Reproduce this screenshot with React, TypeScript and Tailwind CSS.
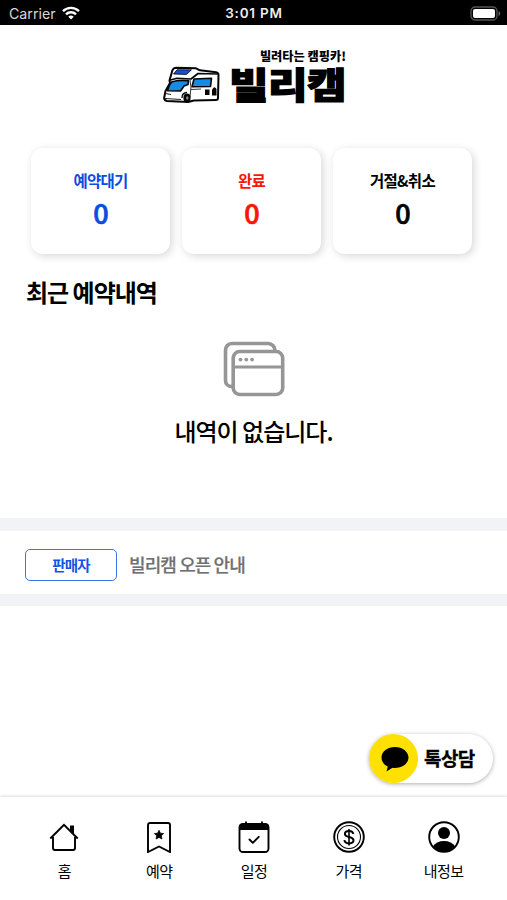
import type { ReactNode } from "react";
import { clsx } from "clsx";

type Stat = {
  label: string;
  count: number;
  color: string;
};

const STATS: Stat[] = [
  { label: "예약대기",  count: 0, color: "text-[#0a4de0]" },
  { label: "완료",      count: 0, color: "text-[#fb1505]" },
  { label: "거절&취소", count: 0, color: "text-black" },
];

function WifiIcon() {
  return (
    <svg width="18" height="14" viewBox="0 0 18 14" fill="none" stroke="#fff" strokeWidth="2.4">
      <path d="M1 5.2C5.5 .7 12.5.7 17 5.2" />
      <path d="M4 8.4c2.8-2.8 7.2-2.8 10 0" />
      <path d="M6.3 10.7c1.5-1.5 3.9-1.5 5.4 0L9 13.6z" fill="#fff" stroke="none" />
    </svg>
  );
}

function BatteryIcon() {
  return (
    <svg width="31" height="15" viewBox="0 0 31 15">
      <rect x="1" y="1" width="26" height="13" rx="4" fill="#000" stroke="#555" strokeWidth="1.3" />
      <rect x="3" y="3" width="22" height="9" rx="2" fill="#fff" />
      <path d="M28.6 5v5c2.2-1 2.2-4 0-5z" fill="#666" />
    </svg>
  );
}

function CamperLogo() {
  return (
    <svg width="58" height="38" viewBox="0 0 58 38" strokeLinejoin="round">
      <path d="M6.5 14.5L9.5 4Q10.5 2 13 1.8L33 2.3L37 4.3L53 6.3Q55.5 6.8 55.5 9L55 32Q55 34 53 34L31 34.5L25 36L4 35Q1 34.5 1.2 31.5L2.5 25L7 17Z" fill="#fff" stroke="#050505" strokeWidth="2" />
      <path d="M14 3.8L28.5 3.8L23.5 8.5L10.5 8Z" fill="#1450d2" stroke="#050505" strokeWidth=".8" />
      <path d="M6.5 14.3L14 12.3L28 13L35 7.5L54.5 8" fill="none" stroke="#050505" strokeWidth="1.7" />
      <path d="M8.5 16Q15 14 25.5 14.8L25 18.5L21 20L17.5 25L4.5 24.8Q5.5 19.5 8.5 16Z" fill="#168be5" stroke="#050505" strokeWidth="1.6" />
      <path d="M31 13L48.5 12.2L47.5 20.5L29 20.8Z" fill="#168be5" stroke="#050505" strokeWidth="1.6" />
      <path d="M27 14L28 21L27 31M28 23.5L38 23" fill="none" stroke="#333" strokeWidth="1" />
      <path d="M2.5 27.5L8 28.5M2 32.5L18 33.5" stroke="#222" strokeWidth="1.1" />
      <path d="M19 32Q19 26.5 24 26.5" fill="none" stroke="#050505" strokeWidth="1.3" />
      <ellipse cx="24" cy="32" rx="3.6" ry="4.4" fill="#050505" />
      <ellipse cx="24.3" cy="32" rx="1.2" ry="1.8" fill="#888" />
      <rect x="42" y="23.5" width="4.5" height="5.5" fill="#050505" />
      <path d="M49 29.5V24Q51 19 53.5 23V29.5Z" fill="#050505" />
    </svg>
  );
}

function WindowsIcon() {
  return (
    <svg width="62" height="56" viewBox="0 0 62 56" fill="none" stroke="#969696" strokeWidth="3.6">
      <path d="M9 45.5C5 45.5 2.5 43 2.5 39.5V9.5C2.5 5.5 5 2.5 9 2.5H45C49.5 2.5 52 6 52 9.5" />
      <rect x="10.2" y="10.5" width="49.5" height="43" rx="6.5" />
      <path d="M10 26h49" strokeWidth="3.2" />
      <g fill="#969696" stroke="none">
        <circle cx="17.5" cy="18.6" r="1.9" />
        <circle cx="23.3" cy="18.6" r="1.9" />
        <circle cx="29.1" cy="18.6" r="1.9" />
      </g>
    </svg>
  );
}

function HomeIcon() {
  return (
    <svg width="32" height="32" viewBox="0 0 32 32" fill="none" stroke="#000" strokeWidth="1.9">
      <path d="M5 16v11c0 1.3.8 2 2 2h18c1.3 0 2-.7 2-2V16" />
      <path d="M2.3 17.5 16 3.8l13.7 13.7" />
      <path d="M22 4.5h4v8.5L22 9z" fill="#000" stroke="none" />
    </svg>
  );
}

function BookmarkIcon() {
  return (
    <svg width="32" height="32" viewBox="0 0 32 32" fill="none" stroke="#000" strokeWidth="1.9">
      <path d="M5 4c0-1.3.8-2 2-2h18c1.3 0 2 .8 2 2v27l-11-5.5-11 5.5z" />
      <path d="m16 9.3 1.4 2.9 3.2.4-2.3 2.2.6 3.2-2.9-1.6-2.9 1.6.6-3.2-2.3-2.2 3.2-.4z" fill="#000" strokeWidth=".8" />
    </svg>
  );
}

function CalendarIcon() {
  return (
    <svg width="32" height="32" viewBox="0 0 32 32" fill="none" stroke="#000" strokeWidth="1.9">
      <rect x="1.5" y="3" width="29" height="28" rx="3.5" />
      <path d="M1 9V6c0-2.5 1.2-3.5 3.5-3.5h23C30 2.5 31 3.5 31 6v3z" fill="#000" stroke="none" />
      <path d="M8 1.3v2.5M24 1.3v2.5" strokeLinecap="round" />
      <path d="m11.5 18.5 3.3 3.3 6-6" strokeLinecap="round" strokeLinejoin="round" />
    </svg>
  );
}

function CoinIcon() {
  return (
    <svg width="32" height="32" viewBox="0 0 32 32" fill="none" stroke="#000">
      <circle cx="16" cy="16" r="14.8" strokeWidth="1.9" />
      <circle cx="16" cy="16" r="11.5" strokeWidth="1.1" />
      <path d="M20.3 12.9c-.3-2-2-3-4.3-3-2.5 0-4.1 1.2-4.1 3 0 4.2 8.6 2 8.6 6.4 0 2-1.8 3.1-4.4 3.1-2.7 0-4.4-1.2-4.7-3.2" strokeWidth="2" />
      <path d="M16 8v16.5" strokeWidth="1.6" />
    </svg>
  );
}

function ProfileIcon() {
  return (
    <svg width="32" height="32" viewBox="0 0 32 32">
      <circle cx="16" cy="16" r="14.8" fill="none" stroke="#000" strokeWidth="1.9" />
      <circle cx="16" cy="12" r="6" fill="#000" />
      <path d="M4.8 25.5C7 22 11 20 16 20s9 2 11.2 5.5C24.5 29 20.5 31 16 31S7.5 29 4.8 25.5z" fill="#000" />
    </svg>
  );
}

const TABS: { label: string; icon: ReactNode }[] = [
  { label: "홈",     icon: <HomeIcon /> },
  { label: "예약",   icon: <BookmarkIcon /> },
  { label: "일정",   icon: <CalendarIcon /> },
  { label: "가격",   icon: <CoinIcon /> },
  { label: "내정보", icon: <ProfileIcon /> },
];

function StatusBar() {
  return (
    <div className="grid h-[25px] shrink-0 grid-cols-3 items-center bg-black pt-[2px] pr-[6px] pl-[9px] font-['Inter',sans-serif] text-[13.5px] text-white">
      <div className="flex items-center gap-1.5 text-[#d8d8d8]">
        <span className="text-[14.2px]">Carrier</span>
        <WifiIcon />
      </div>
      <span className="pr-[2px] text-center font-semibold tracking-[0.8px] text-[#eee]">3:01 PM</span>
      <div className="flex justify-end">
        <BatteryIcon />
      </div>
    </div>
  );
}

function StatCard({ stat }: { stat: Stat }) {
  return (
    <div
      className={clsx(
        "flex h-[106px] flex-1 flex-col items-center rounded-xl bg-white pt-[21px] shadow-[2px_2px_8px_rgba(0,0,0,0.16)]",
        stat.color
      )}
    >
      <span className="text-[15.5px] leading-[22px] font-bold tracking-[-0.7px]">{stat.label}</span>
      <span className="mt-[5px] ml-px text-[27px] leading-[34px] font-medium [-webkit-text-stroke:0.7px_currentColor]">{stat.count}</span>
    </div>
  );
}

export default function App() {
  return (
    <div className="relative flex h-[900px] w-[507px] flex-col overflow-hidden bg-white font-['Noto_Sans_CJK_KR',sans-serif] text-black">
      <StatusBar />

      <header className="flex h-[123px] shrink-0 pt-[24px] pl-[163px]">
        <div className="pt-[17px]">
          <CamperLogo />
        </div>
        <div className="ml-[8px] flex w-[117px] flex-col">
          <span className="self-end text-[12.2px] leading-[14px] font-black whitespace-nowrap">빌려타는 캠핑카!</span>
          <span className="-mt-[2px] scale-y-[0.85] text-[43px] leading-[44px] font-black tracking-[-0.6px] whitespace-nowrap [-webkit-text-stroke:1.4px_#000]">빌리캠</span>
        </div>
      </header>

      <section className="flex shrink-0 gap-3 pr-[35px] pl-[31px]">
        {STATS.map((stat) => (
          <StatCard key={stat.label} stat={stat} />
        ))}
      </section>

      <section className="flex h-[264px] shrink-0 flex-col pt-[22px]">
        <h2 className="pl-[26px] text-[24px] leading-[32px] font-bold tracking-[-1px]">최근 예약내역</h2>
        <div className="mt-[33px] flex flex-col items-center">
          <WindowsIcon />
          <p className="mt-[18px] text-[24px] leading-[32px] font-medium tracking-[-1px]">내역이 없습니다.</p>
        </div>
      </section>

      {/* Notice row */}
      <section className="flex h-[88px] shrink-0 items-center border-t-[13px] border-b-[12px] border-[#f1f3f7] pt-[5px] pl-[25px]">
        <span className="flex h-8 w-[92px] items-center justify-center rounded-[5px] border-[1.5px] border-[#3a73e6] text-[14.5px] font-bold tracking-[-0.8px] text-[#0f55e8]">
          판매자
        </span>
        <span className="mb-px ml-3 text-[18px] font-medium tracking-[-0.9px] text-[#707070] [-webkit-text-stroke:0.2px_#707070]">빌리캠 오픈 안내</span>
      </section>

      <nav className="mt-auto flex h-[103px] shrink-0 bg-white pt-[24px] pr-[16px] pl-[17px] shadow-[0_-1px_3px_rgba(0,0,0,0.14)]">
        {TABS.map((tab) => (
          <button key={tab.label} className="flex flex-1 flex-col items-center">
            {tab.icon}
            <span className="mt-[8px] text-[15px] leading-[20px] tracking-[-0.6px]">{tab.label}</span>
          </button>
        ))}
      </nav>

      {/* Floating chat button */}
      <button className="absolute top-[734px] left-[369px] flex h-[49px] w-[124px] items-center rounded-full bg-white shadow-[0_1px_4px_rgba(0,0,0,0.32)]">
        <span className="flex size-[49px] shrink-0 items-center justify-center rounded-full bg-[#fee102]">
          <svg width="28" height="26" viewBox="0 0 28 26" className="ml-[2px]">
            <path d="M14 1C6.5 1 .5 5.5.5 11.5c0 4 2.5 7.3 6.3 9.1L5.5 25.5l6-3.8c.8.1 1.7.2 2.5.2 7.5 0 13.5-4.6 13.5-10.4S21.5 1 14 1z" />
          </svg>
        </span>
        <span className="ml-[6px] text-[19px] font-bold tracking-[-0.6px] [-webkit-text-stroke:0.3px_#000]">톡상담</span>
      </button>
    </div>
  );
}
